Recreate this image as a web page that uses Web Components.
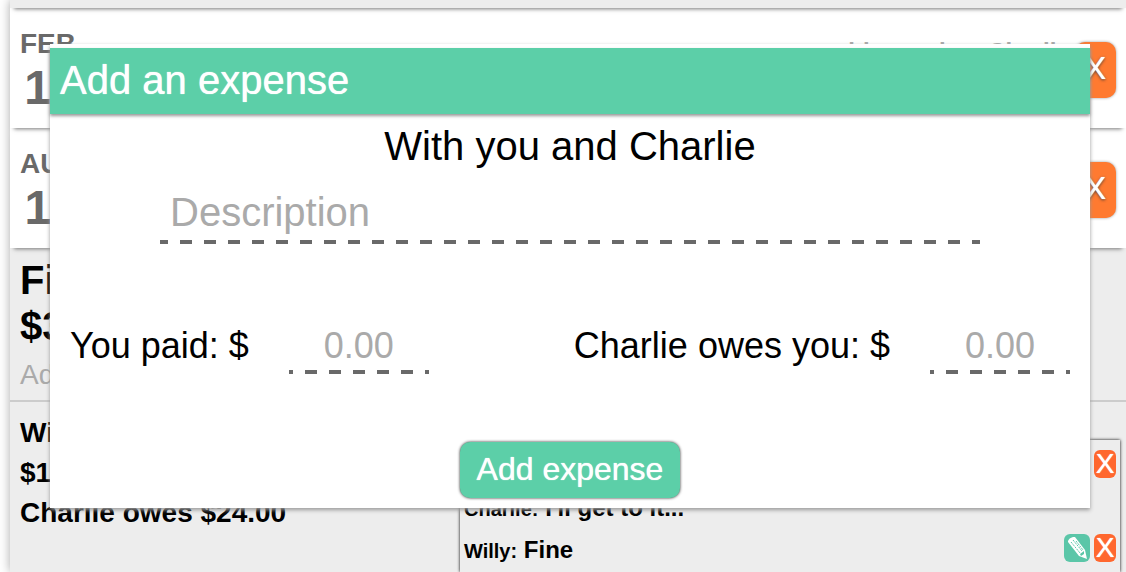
<!DOCTYPE html>
<html lang="en">
<head>
<meta charset="utf-8">
<title>Expenses with Charlie</title>
<style>
html, body { margin: 0; height: 100%; }
body { font-family: "Liberation Sans", Helvetica, Arial, sans-serif; color: #000; background: #fff; overflow: hidden; }
</style>
</head>
<body>
<expense-app></expense-app>
<script>
const define = (name, html, setup) => {
  const template = document.createElement('template');
  template.innerHTML = html;
  customElements.define(name, class extends HTMLElement {
    constructor() {
      super();
      this.attachShadow({ mode: 'open' }).append(template.content.cloneNode(true));
    }
    connectedCallback() { if (setup) setup(this, this.shadowRoot); }
  });
};

define('app-button', `
<style>
:host { display: inline-block; }
button { display: block; box-sizing: border-box; margin: 0; border: 0; border-radius: 10px; padding: 9px 17px 11px; font: 32px/36px "Liberation Sans", sans-serif; color: #fff; background: #5ccfa8; box-shadow: 0 0 3px #222; text-shadow: 0 0 1px #fff; cursor: pointer; }
:host([kind="remove"]) button { padding: 8px 10px 12px; background: #ff7a30; box-shadow: 0 0 3px #999; text-shadow: 0 0 1px #fff, 0 1px 3px #333; }
</style>
<button type="button"><slot></slot></button>`);

define('icon-button', `
<style>
:host { display: block; }
button { display: flex; align-items: center; justify-content: center; box-sizing: border-box; width: 22px; height: 28px; margin: 0; border: 0; border-radius: 6px; padding: 0; font: 28px/28px "Liberation Sans", sans-serif; color: #fff; background: #ff672e; text-shadow: 0 0 1px #fff; cursor: pointer; }
:host([kind="edit"]) button { width: 26px; background: #5bc6a8; }
</style>
<button type="button"><slot></slot></button>`,
(el, root) => root.querySelector('button').setAttribute('aria-label', el.getAttribute('kind') === 'edit' ? 'Edit comment' : 'Delete comment'));

define('expense-row', `
<style>
:host { display: flex; align-items: flex-start; position: relative; z-index: 1; padding: 20px 10px 12px; box-shadow: 0 5px 4px -4px #777; }
.date { min-width: 62px; color: #696969; font-weight: bold; }
.month { font-size: 28px; line-height: 32px; }
.day { font-size: 48px; line-height: 56px; text-align: center; }
.note { flex: 1; padding: 10px 5px 0 0; text-align: right; font-size: 24px; line-height: 28px; font-weight: bold; color: #aaa; }
app-button { margin-top: 14px; }
</style>
<div class="date"><div class="month"><slot name="month"></slot></div><div class="day"><slot name="day"></slot></div></div>
<div class="note"><slot></slot></div>
<app-button kind="remove">X</app-button>`);

define('comment-line', `
<style>
:host { display: flex; align-items: center; gap: 4px; height: 42px; padding: 0 4px; font-weight: bold; font-size: 24px; }
p { flex: 1; margin: 0; padding-top: 5px; line-height: 28px; }
.who { font-size: 20px; }
</style>
<p><span class="who"><slot name="who"></slot></span> <slot></slot></p>
<slot name="tools"></slot>`);

define('expense-detail', `
<style>
:host { display: flex; flex-direction: column; flex: 1; background: #ededed; }
header { padding: 9px 10px 8px; border-bottom: 2px solid #ccc; }
h2 { margin: 0; font-size: 40px; line-height: 46px; }
.added { padding-top: 9px; font-size: 28px; line-height: 34px; color: #aaa; }
.body { flex: 1; display: grid; grid-template-columns: 2fr 3fr; padding: 11px 6px 0 10px; }
.shares { font-size: 28px; line-height: 40px; font-weight: bold; }
.comments { margin-top: 27px; padding-top: 3px; box-shadow: 0 0 3px #000; }
</style>
<header>
<h2>Fine</h2>
<h2>$36.00</h2>
<div class="added">Added</div>
</header>
<div class="body">
<div class="shares"><div>Willy</div><div>$12.00</div><div>Charlie owes $24.00</div></div>
<div class="comments"><slot></slot></div>
</div>`);

define('amount-field', `
<style>
:host { display: flex; align-items: flex-start; gap: 40px; font-size: 36px; line-height: 44px; }
input { box-sizing: border-box; width: 140px; height: 50px; margin: 0; border: 0; outline: 0; padding: 0 0 6px; font: inherit; color: #000; text-align: center; background: repeating-linear-gradient(90deg, #696969 0 4px, transparent 4px 16px, #696969 16px 24px) 0 100% / 100% 4px no-repeat; }
input::placeholder { color: #aaa; opacity: 1; }
</style>
<label for="amount"><slot></slot></label>
<input id="amount" type="text" inputmode="decimal" placeholder="0.00">`);

define('expense-dialog', `
<style>
:host { display: block; position: absolute; z-index: 2; top: 44px; left: 50px; right: 36px; padding: 4px 0 10px; box-sizing: border-box; background: #fff; box-shadow: 0 2px 4px #999; }
h1 { margin: 0; padding: 10px 10px 12px; font-size: 40px; line-height: 44px; font-weight: normal; color: #fff; background: #5ccfa8; box-shadow: 0 2px 3px #999; text-shadow: 0 0 1px #fff; }
form { display: flex; flex-direction: column; align-items: center; padding-top: 10px; }
.with { margin: 0; font-size: 40px; line-height: 44px; }
.description { align-self: stretch; box-sizing: border-box; height: 54px; margin: 22px 110px 80px; border: 0; outline: 0; padding: 0 10px 10px; font: 40px/44px "Liberation Sans", sans-serif; background: repeating-linear-gradient(90deg, #696969 0 8px, transparent 8px 20px, #696969 20px 24px) 0 100% / 100% 4px no-repeat; }
.description::placeholder { color: #aaa; opacity: 1; }
.amounts { align-self: stretch; display: flex; justify-content: space-between; padding: 0 20px; margin-bottom: 68px; }
</style>
<h1>Add an expense</h1>
<form>
<p class="with">With you and Charlie</p>
<input class="description" type="text" aria-label="Description" placeholder="Description">
<div class="amounts">
<amount-field>You paid: $</amount-field>
<amount-field>Charlie owes you: $</amount-field>
</div>
<app-button>Add expense</app-button>
</form>`);

const pencil = `<svg width="20" height="24" viewBox="0 0 20 24" aria-hidden="true"><path d="M1 5Q2 2 6 1L8 1L18 14L20 23L12 20L1 6Z" fill="#fff"/><path d="M4 6L13 17M6 4L15 15M9 5L16 14" fill="none" stroke="#5bc6a8" stroke-width="1" stroke-dasharray="2 1"/><path d="M13 18L17 15L17 18L14 20Z" fill="#5bc6a8"/></svg>`;

define('expense-app', `
<style>
:host { display: block; height: 100%; position: relative; overflow: hidden; }
main { display: flex; flex-direction: column; box-sizing: border-box; min-height: 100%; margin-left: 10px; background: #fff; box-shadow: 0 0 10px #aaa; }
.previous { height: 40px; margin-top: -32px; background: #ededed; box-shadow: 0 5px 4px -4px #777; }
</style>
<main>
<div class="previous"></div>
<expense-row><span slot="month">FEB</span><span slot="day">10</span>this you lent Charlie</expense-row>
<expense-row><span slot="month">AUG</span><span slot="day">10</span></expense-row>
<expense-detail>
<comment-line><span slot="who">Willy:</span><icon-button slot="tools" kind="edit">${pencil}</icon-button><icon-button slot="tools">X</icon-button></comment-line>
<comment-line><span slot="who">Charlie:</span>I'll get to it...</comment-line>
<comment-line><span slot="who">Willy:</span>Fine<icon-button slot="tools" kind="edit">${pencil}</icon-button><icon-button slot="tools">X</icon-button></comment-line>
</expense-detail>
</main>
<expense-dialog role="dialog" aria-label="Add an expense"></expense-dialog>`);
</script>
</body>
</html>
